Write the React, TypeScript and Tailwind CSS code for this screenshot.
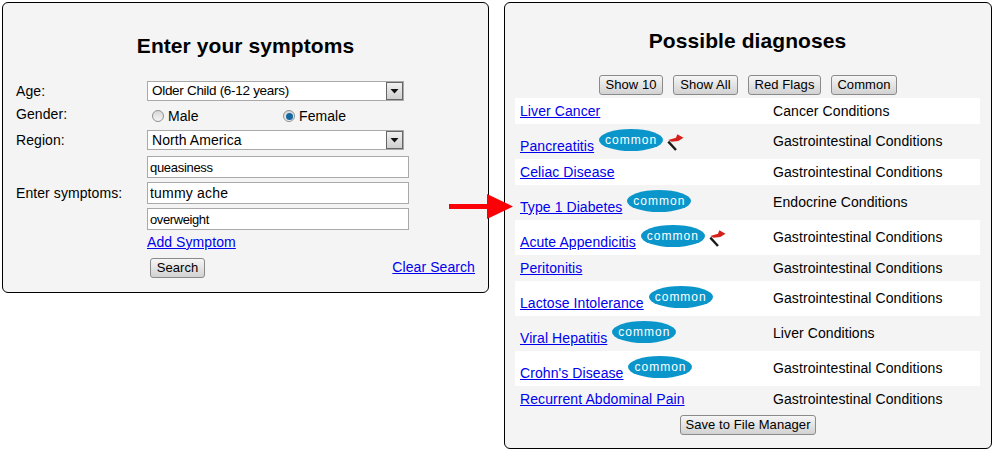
const diagnoses = [
    { name: 'Liver Cancer', category: 'Cancer Conditions' },
    { name: 'Pancreatitis', category: 'Gastrointestinal Conditions', common: true, flag: true },
    { name: 'Celiac Disease', category: 'Gastrointestinal Conditions' },
    { name: 'Type 1 Diabetes', category: 'Endocrine Conditions', common: true },
    { name: 'Acute Appendicitis', category: 'Gastrointestinal Conditions', common: true, flag: true },
    { name: 'Peritonitis', category: 'Gastrointestinal Conditions' },
    { name: 'Lactose Intolerance', category: 'Gastrointestinal Conditions', common: true },
    { name: 'Viral Hepatitis', category: 'Liver Conditions', common: true },
    { name: "Crohn's Disease", category: 'Gastrointestinal Conditions', common: true },
    { name: 'Recurrent Abdominal Pain', category: 'Gastrointestinal Conditions' },
];

const linkClass = 'text-[#0000ee] underline';

const Button = ({ label, className = '' }: { label: string; className?: string }) => (
    <button
        className={`h-[20px] rounded-[3px] border border-[#8a8a8a] bg-linear-to-b from-[#f6f6f6] to-[#d2d2d2] text-[13px] leading-[18px] text-black ${className}`}
    >
        {label}
    </button>
);

const FakeSelect = ({ value, className = '' }: { value: string; className?: string }) => (
    <div className="flex h-[20px] w-[257px] items-center justify-between border border-[#a9a9a9] bg-white pl-[4px] leading-[18px]">
        <span className={className}>{value}</span>
        <span className="flex h-[18px] w-[17px] items-center justify-center border border-[#666] bg-linear-to-b from-[#f0f0f0] to-[#cfcfcf]">
            <svg width="9" height="5" viewBox="0 0 9 5">
                <path d="M0.5 0h8L4.5 4.5z" fill="#111" />
            </svg>
        </span>
    </div>
);

const Radio = ({ checked }: { checked?: boolean }) => (
    <span className="flex h-[12px] w-[12px] items-center justify-center rounded-full border border-[#8f8f8f] bg-linear-to-b from-[#d8d8d8] to-[#f4f4f4]">
        {checked && <span className="h-[7px] w-[7px] rounded-full bg-[#16679f]" />}
    </span>
);

const TextBox = ({ value, className = '' }: { value: string; className?: string }) => (
    <input
        readOnly
        value={value}
        className={`h-[22px] w-[262px] border border-[#a9a9a9] bg-white px-[2px] text-black outline-none ${className}`}
    />
);

const RedFlag = () => (
    <svg width="17" height="18" viewBox="0 0 17 18" className="ml-[4px] mt-[10px]">
        <path d="M1.3 7.6 L9 16" stroke="#1a1a1a" strokeWidth="2.4" />
        <path d="M1.3 6 L9 3.7 L10.3 0.3 L16.5 3.7 L11.3 7 L4.6 7.7 Z" fill="#d6201c" />
    </svg>
);

const CommonBadge = () => (
    <span className="ml-[5px] mt-[5px] flex h-[22px] w-[64px] items-center justify-center rounded-[50%] bg-[#0a96cb] text-[12px] tracking-[1px] text-white">
        common
    </span>
);

export default function App() {
    return (
        <div className="relative flex h-[451px] w-[994px] items-start gap-[15px] overflow-hidden bg-white pl-[2px] pt-[2px] font-['Liberation_Sans',Arial,sans-serif] text-[14px] tracking-[0.08px] text-black">
            <section className="h-[291px] w-[487px] rounded-[6px] border border-black bg-[#f4f4f4] pl-[13px] pr-[13px]">
                <h1 className="pt-[29px] text-center text-[21px] font-bold leading-[28px]">Enter your symptoms</h1>
                <div className="mt-[21px] grid grid-cols-[131px_1fr]">
                    <div className="flex h-[20px] items-center">Age:</div>
                    <FakeSelect value="Older Child (6-12 years)" className="text-[13.5px] tracking-[-0.3px]" />
                    <div className="flex h-[29px] items-start pt-[3px]">Gender:</div>
                    <div className="flex h-[29px] items-center pl-[5px] pt-[1px]">
                        <div className="flex w-[131px] items-center gap-[4px]">
                            <Radio />
                            <span>Male</span>
                        </div>
                        <div className="flex items-center gap-[4px]">
                            <Radio checked />
                            <span>Female</span>
                        </div>
                    </div>
                    <div className="flex h-[20px] items-center">Region:</div>
                    <FakeSelect value="North America" />
                    <div className="flex h-[80px] items-center pt-[6px]">Enter symptoms:</div>
                    <div className="flex flex-col gap-[4px] pt-[6px]">
                        <TextBox value="queasiness" className="text-[13px] tracking-[-0.3px]" />
                        <TextBox value="tummy ache" className="text-[14px] tracking-[0.2px]" />
                        <TextBox value="overweight" className="text-[13px] tracking-[-0.4px]" />
                    </div>
                    <div />
                    <a className={`${linkClass} mt-[4px] leading-[17px]`}>Add Symptom</a>
                </div>
                <div className="mt-[6px] flex items-center justify-between pl-[134px]">
                    <Button label="Search" className="w-[55px]" />
                    <a className={linkClass}>Clear Search</a>
                </div>
            </section>

            <section className="h-[447px] w-[488px] rounded-[6px] border border-black bg-[#f4f4f4] pl-[10px] pr-[11px]">
                <h1 className="pt-[24px] text-center text-[21px] font-bold leading-[28px]">Possible diagnoses</h1>
                <div className="mt-[20px] flex justify-center gap-[10px] pl-[1px]">
                    <Button label="Show 10" className="w-[64px]" />
                    <Button label="Show All" className="w-[65px]" />
                    <Button label="Red Flags" className="w-[73px]" />
                    <Button label="Common" className="w-[66px]" />
                </div>
                <div className="mt-[3px] w-[465px]">
                    {diagnoses.map((d, i) => (
                        <div
                            key={d.name}
                            className={`grid grid-cols-[258px_1fr] ${d.common ? 'h-[35px]' : 'h-[26px]'} ${i % 2 === 0 ? 'bg-white' : 'bg-[#f4f4f4]'}`}
                        >
                            <div className="flex items-start pl-[5px]">
                                <a className={`${linkClass} ${d.common ? 'mt-[14px]' : 'mt-[5px]'} leading-[16px]`}>{d.name}</a>
                                {d.common && <CommonBadge />}
                                {d.flag && <RedFlag />}
                            </div>
                            <div className={`${d.common ? 'pt-[9px]' : 'pt-[5px]'} leading-[16px]`}>{d.category}</div>
                        </div>
                    ))}
                </div>
                <div className="mt-[3px] flex justify-center pl-[1px]">
                    <Button label="Save to File Manager" className="w-[136px]" />
                </div>
            </section>

            <svg width="66" height="26" viewBox="0 0 66 26" className="absolute left-[449px] top-[194px]">
                <path d="M0 10h38V0l26 12.5L38 25V15H0z" fill="#fb0007" />
            </svg>
        </div>
    );
}
